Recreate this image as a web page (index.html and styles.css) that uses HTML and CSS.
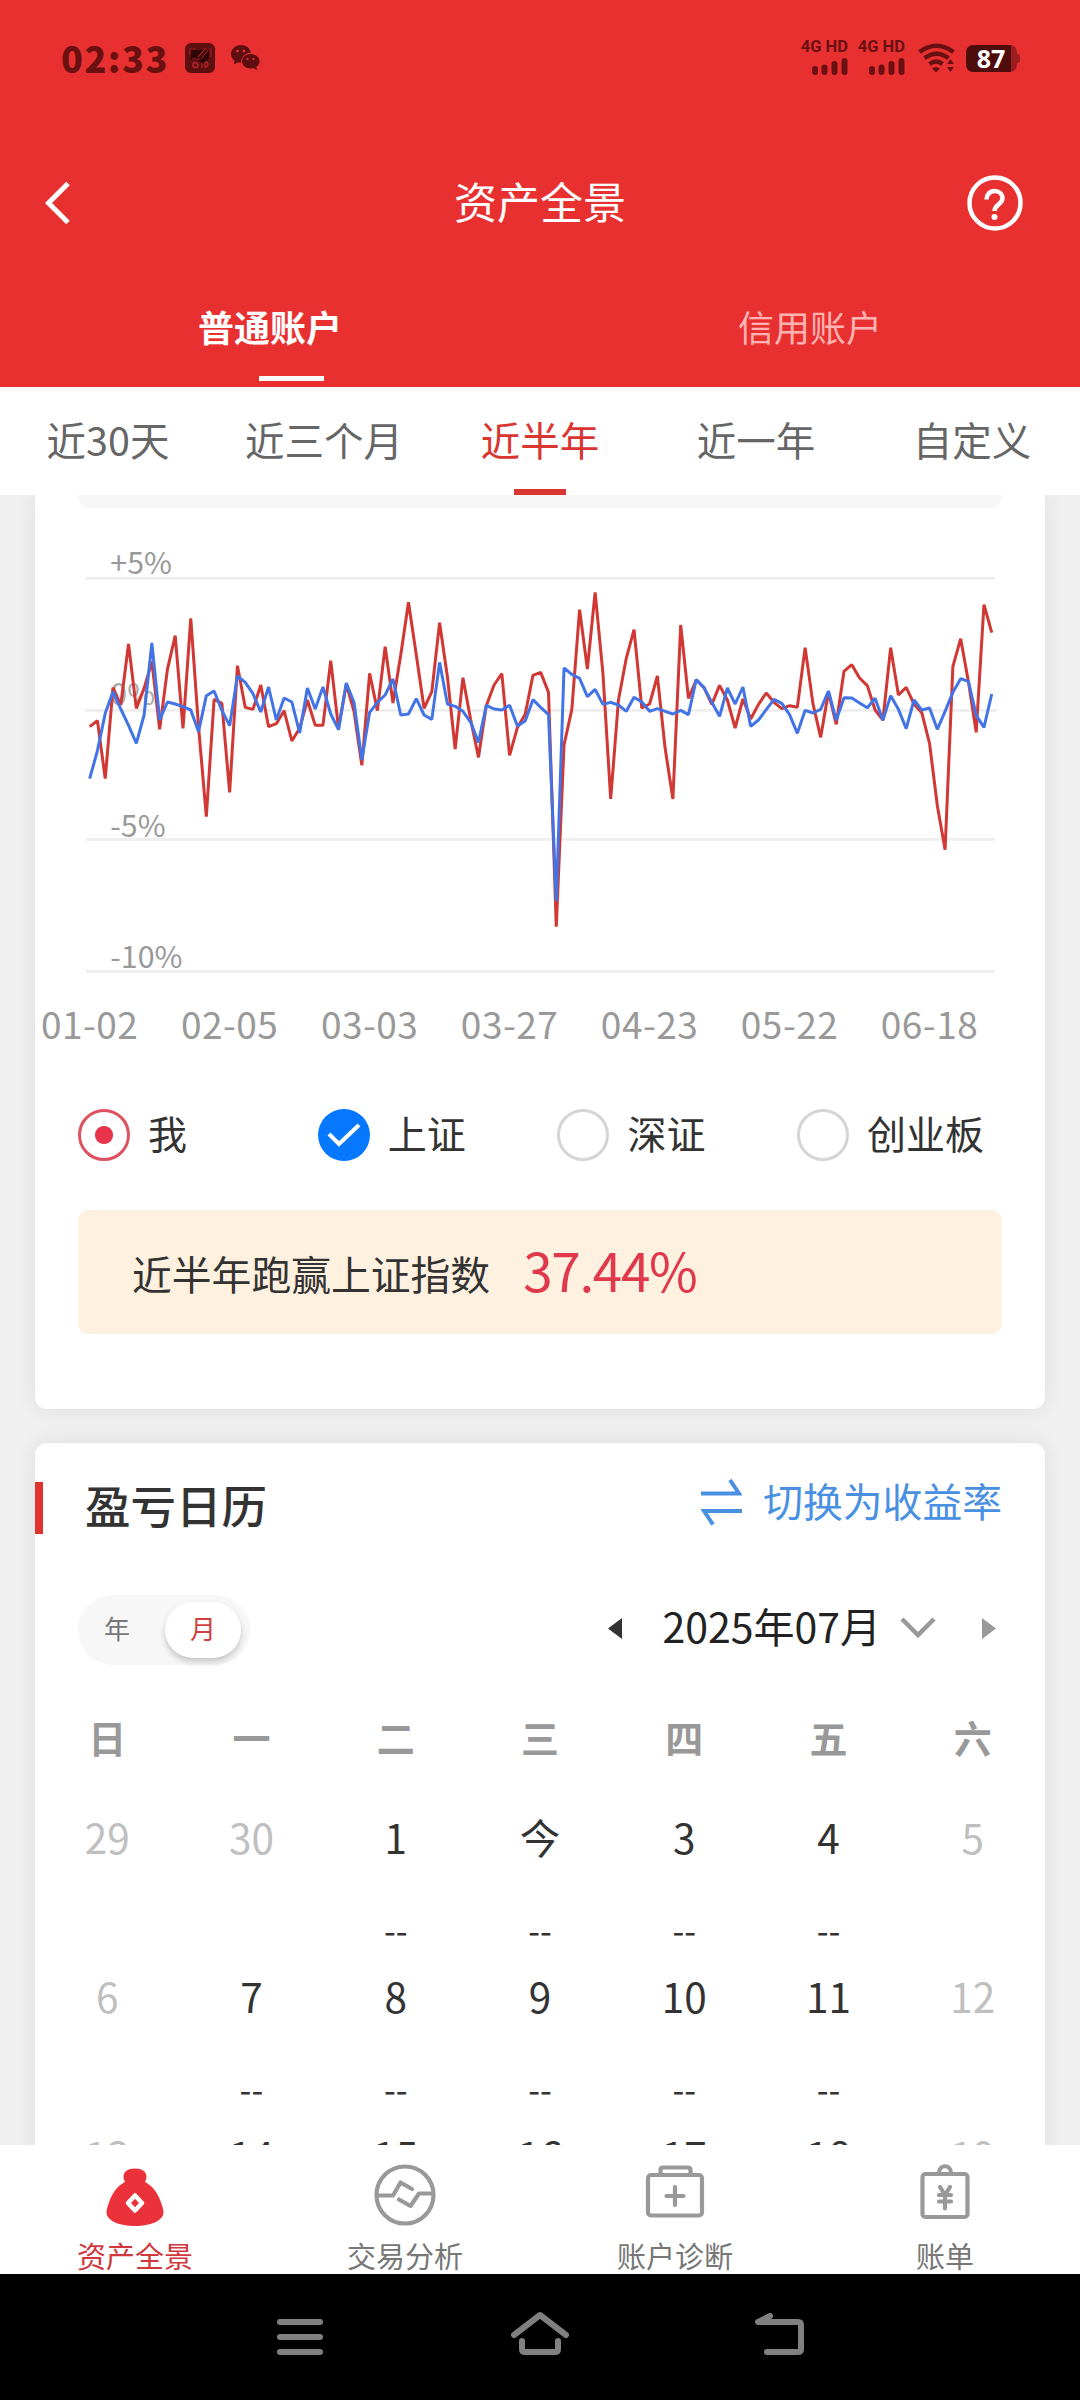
FILE: index.html
```html
<!DOCTYPE html>
<html lang="zh-CN">
<head>
    <meta charset="UTF-8">
    <meta name="viewport" content="width=device-width, initial-scale=1.0">
    <title>资产全景</title>
    <link rel="stylesheet" href="styles.css">
</head>
<body>
    <header class="header">
        <div class="status">
            <span class="time">02:33</span>
            <svg class="status-app" width="30" height="30" viewBox="0 0 30 30">
                <rect width="30" height="30" rx="6" fill="#5f0f10"/>
                <path d="M5 7h19v8l-5 6-6-4H6z" fill="#300507"/>
                <path d="M5 12V6h6M24 6h2v8M7 16h8M13 14l8-9M16 16l7-9" fill="none" stroke="#a02024" stroke-width="1.2"/>
                <circle cx="10.500" cy="22" r="2.600" fill="none" stroke="#b3262a" stroke-width="1.500"/>
                <path d="M17 20v5M20 19v5c4 0 4-5 0-5" fill="none" stroke="#b3262a" stroke-width="1.300"/>
            </svg>
            <svg class="status-chat" width="29" height="26" viewBox="0 0 29 26">
                <path d="M10 0C4.500 0 0 4 0 9c0 3 1.300 5 3.500 6.600L3 19.500l4-2.200 3 .5C10 12 14 8 20 7.800 19 3 15 0 10 0z" fill="#5f0f10"/>
                <path d="M19.500 9C15 9 11 12 11 16.300S15 23.500 19.500 23.500l3-.4 3.500 2-.7-3.300C27.500 20.500 28.500 18.500 28.500 16.300 28.500 12 24 9 19.500 9z" fill="#5f0f10"/>
                <g fill="#e83030"><circle cx="6.500" cy="6" r="1.300"/><circle cx="13" cy="6" r="1.300"/><circle cx="16.500" cy="14" r="1.100"/><circle cx="22.500" cy="14" r="1.100"/></g>
            </svg>
            <div class="status-right">
                <div class="signal">
                    <span>4G HD</span>
                    <svg width="36" height="17" viewBox="0 0 36 17"><path d="M3 11v3M12.500 9.500V14M22.500 6v8M32.500 3v11" stroke="#6b1011" stroke-width="6" stroke-linecap="round"/></svg>
                </div>
                <div class="signal">
                    <span>4G HD</span>
                    <svg width="36" height="17" viewBox="0 0 36 17"><path d="M3 11v3M12.500 9.500V14M22.500 6v8M32.500 3v11" stroke="#6b1011" stroke-width="6" stroke-linecap="round"/></svg>
                </div>
                <svg class="wifi" width="38" height="30" viewBox="0 0 38 30">
                    <g fill="none" stroke="#6b1011" stroke-width="4.500">
                        <path d="M1.500 9q17-12.500 34 0"/>
                        <path d="M6.500 15q12-8.500 24 0"/>
                        <path d="M11.500 21q7-5 13 0"/>
                    </g>
                    <path d="M14 25.500q4-3 8 0l-4 4z" fill="#6b1011"/>
                    <path d="M29 21l3.500-5 3.500 5zM29 24h7l-3.500 5z" fill="#6b1011"/>
                </svg>
                <div class="battery"><span>87</span></div>
            </div>
        </div>
        <div class="title-bar">
            <svg width="26" height="44" viewBox="0 0 26 44"><path d="M23 2.500L3.500 22 23 41.500" fill="none" stroke="#fff" stroke-width="5"/></svg>
            <h1>资产全景</h1>
            <svg width="56" height="58" viewBox="0 0 56 58">
                <circle cx="28" cy="29" r="25.500" fill="none" stroke="#fff" stroke-width="4.500"/>
                <path d="M19.500 25.500c0-5 3.500-8.500 8-8.500s8 3 8 7.500c0 5.500-8 6-8 12.500" fill="none" stroke="#fff" stroke-width="4.500"/>
                <circle cx="27.500" cy="43" r="3" fill="#fff"/>
            </svg>
        </div>
        <nav class="account-tabs">
            <a class="active">普通账户</a>
            <a>信用账户</a>
        </nav>
    </header>

    <nav class="period-tabs">
        <a>近30天</a>
        <a>近三个月</a>
        <a class="active">近半年</a>
        <a>近一年</a>
        <a>自定义</a>
    </nav>

    <main class="content">
        <section class="card card-chart">
            <div class="summary-end"></div>
            <svg class="chart" viewBox="0 0 3030 1560">
                <g class="grid">
                    <path d="M153 115H2880M149 511H2885M153 898H2880M153 1294H2880"/>
                </g>
                <g class="y-labels">
                    <text x="226" y="101">+5%</text>
                    <text x="226" y="496" class="zero">0%</text>
                    <text x="226" y="890">-5%</text>
                    <text x="226" y="1283">-10%</text>
                </g>
                <polyline id="line-me" class="line-me"/>
                <polyline id="line-index" class="line-index"/>
                <g id="x-labels" class="x-labels"></g>
            </svg>
            <div class="legend">
                <div class="legend-item"><span class="radio me"></span><label>我</label></div>
                <div class="legend-item">
                    <span class="radio checked"><svg width="34" height="26" viewBox="0 0 34 26"><path d="M2 12l10 10L32 3" fill="none" stroke="#fff" stroke-width="4"/></svg></span>
                    <label>上证</label>
                </div>
                <div class="legend-item"><span class="radio"></span><label>深证</label></div>
                <div class="legend-item"><span class="radio"></span><label>创业板</label></div>
            </div>
            <div class="banner">
                <span>近半年跑赢上证指数</span>
                <strong>37.44%</strong>
            </div>
        </section>

        <section class="card card-calendar">
            <div class="card-head">
                <h2>盈亏日历</h2>
                <a class="switch">
                    <svg width="41" height="47" viewBox="0 0 41 47"><path d="M0 14.500h38L29 1M41 32H3l9 13.500" fill="none" stroke="#4a90e2" stroke-width="4"/></svg>
                    <span>切换为收益率</span>
                </a>
            </div>
            <div class="calendar-bar">
                <div class="toggle">
                    <span>年</span>
                    <span class="active">月</span>
                </div>
                <div class="month">
                    <svg width="14" height="21" viewBox="0 0 14 21"><path d="M14 0v21L0 10.500z" fill="#333"/></svg>
                    <span>2025年07月</span>
                    <svg class="chevron" width="36" height="24" viewBox="0 0 36 24"><path d="M2 3l16 16L34 3" fill="none" stroke="#999" stroke-width="4.500"/></svg>
                    <svg width="14" height="21" viewBox="0 0 14 21"><path d="M0 0v21l14-10.500z" fill="#999"/></svg>
                </div>
            </div>
            <div class="week">
                <span>日</span><span>一</span><span>二</span><span>三</span><span>四</span><span>五</span><span>六</span>
            </div>
            <div class="days" id="days"></div>
        </section>
    </main>

    <nav class="tabbar">
        <a class="active">
            <svg width="64" height="64" viewBox="0 0 64 64">
                <path d="M20.500 13.500c0-5 4.500-8 11.500-8s11.500 3 11.500 8c0 3-1 4-1.500 5.500C50 23 55.500 31 58.500 41c1.500 4 2 6 2 8 0 9-13.500 14-28.500 14S3.500 58 3.500 49c0-2 .5-4 2-8 3-10 8.500-18 16.500-22-.5-1.500-1.500-2.500-1.500-5.500z" fill="#eb323a"/>
                <path d="M32 32.500l7 7.500-7 7.500-7-7.500z" fill="none" stroke="#fff" stroke-width="4.500" stroke-linejoin="round"/>
            </svg>
            资产全景
        </a>
        <a>
            <svg width="64" height="64" viewBox="0 0 64 64">
                <g fill="none" stroke="#999" stroke-width="4.200" stroke-linecap="round" stroke-linejoin="round">
                    <circle cx="32" cy="32" r="28.500"/>
                    <path d="M4 32.500h16l7.500-13L39 26M60 30.500H46L37.500 43 26 36.500"/>
                </g>
            </svg>
            交易分析
        </a>
        <a>
            <svg width="64" height="64" viewBox="0 0 64 64">
                <g fill="none" stroke="#999" stroke-width="4.200" stroke-linejoin="round">
                    <rect x="5" y="12" width="54" height="40.500" rx="3"/>
                    <path d="M17.500 12V7q0-2.500 2.500-2.500h25q2.500 0 2.500 2.500v5"/>
                    <path d="M32 24v18M23.500 33h17" stroke-linecap="round"/>
                </g>
            </svg>
            账户诊断
        </a>
        <a>
            <svg width="64" height="64" viewBox="0 0 64 64">
                <g fill="none" stroke="#999" stroke-width="4.200" stroke-linejoin="round">
                    <rect x="9.500" y="11" width="45" height="43" rx="3"/>
                    <path d="M26 10c0-9 12-9 12 0"/>
                    <path d="M27 24l5 8 5-8M32 32v13.500M26 32h12M26 38.500h12" stroke-linecap="round"/>
                </g>
            </svg>
            账单
        </a>
    </nav>

    <footer class="system-nav">
        <svg width="60" height="60" viewBox="0 0 60 60"><path d="M10 22h40M10 37h40M10 52h40"/></svg>
        <svg width="60" height="60" viewBox="0 0 60 60"><path d="M4 35l26-20 26 20M12 41v8q0 3 3 3h30q3 0 3-3v-8"/></svg>
        <svg width="60" height="60" viewBox="0 0 60 60"><path d="M20 16L8 22h40q3 0 3 3v24q0 3-3 3H17"/></svg>
    </footer>

    <script>
        // y positions of each trading day, in chart units
        const me = [
            560, 542, 716, 443, 495, 312, 505, 445, 365, 568, 388, 287, 565, 235, 560, 830, 478, 490, 757, 377,
            502, 508, 435, 560, 551, 512, 603, 565, 480, 556, 556, 362, 565, 432, 515, 676, 400, 512, 320, 489,
            345, 187, 345, 505, 455, 248, 410, 627, 413, 540, 652, 497, 435, 401, 646, 563, 523, 406, 397, 457,
            1160, 615, 508, 209, 387, 157, 400, 777, 480, 355, 269, 504, 492, 408, 625, 777, 255, 475, 420, 443,
            493, 436, 480, 564, 477, 537, 493, 459, 487, 506, 497, 502, 323, 490, 592, 457, 553, 394, 374, 414,
            437, 510, 540, 323, 465, 442, 492, 518, 610, 797, 929, 380, 296, 425, 577, 194, 278
        ];
        const index = [
            716, 632, 520, 455, 507, 556, 610, 525, 309, 540, 486, 492, 500, 510, 575, 467, 453, 511, 557, 408,
            427, 461, 516, 441, 540, 474, 486, 579, 444, 507, 441, 522, 569, 429, 488, 660, 517, 487, 465, 417,
            525, 522, 476, 525, 538, 367, 492, 499, 514, 547, 607, 496, 507, 510, 496, 558, 543, 479, 502, 524,
            1083, 384, 403, 415, 470, 448, 493, 487, 495, 514, 472, 486, 514, 506, 514, 522, 511, 524, 419, 443,
            487, 529, 444, 492, 441, 559, 540, 509, 478, 490, 524, 580, 511, 519, 508, 453, 541, 473, 474, 489,
            503, 475, 541, 467, 508, 566, 480, 510, 504, 568, 514, 457, 416, 424, 526, 562, 462
        ];
        const dates = ['01-02', '02-05', '03-03', '03-27', '04-23', '05-22', '06-18'];
        const startX = 164;
        const stepX = 23.33;

        function toPoints(data) {
            return data.map((y, i) => `${(startX + i * stepX).toFixed(1)},${y}`).join(' ');
        }

        document.querySelector('#line-me').setAttribute('points', toPoints(me));
        document.querySelector('#line-index').setAttribute('points', toPoints(index));
        document.querySelector('#x-labels').innerHTML = dates
            .map((d, i) => `<text x="${startX + i * stepX * 18}" y="1497">${d}</text>`)
            .join('');

        const days = [29, 30, 1, '今', 3, 4, 5, 6, 7, 8, 9, 10, 11, 12, 13, 14, 15, 16, 17, 18, 19];
        let html = '';
        days.forEach((day, i) => {
            const off = i < 2 || i % 7 === 0 || i % 7 === 6;
            const profit = off || i >= 14 ? '' : '<em>--</em>';
            html += `
                <div class="day${off ? ' off' : ''}">
                    <span>${day}</span>
                    ${profit}
                </div>
            `;
        });
        document.querySelector('#days').innerHTML = html;
    </script>
</body>
</html>
```
FILE: styles.css
```css
* {
    box-sizing: border-box;
    margin: 0;
    padding: 0;
}
body {
    width: 1080px;
    height: 2400px;
    overflow: hidden;
    font-family: "Noto Sans CJK SC", sans-serif;
    color: #333;
    background-color: #f0f0f0;
}
svg {
    display: block;
    flex-shrink: 0;
}
.header {
    height: 387px;
    background-color: #e83030;
    color: #fff;
}
.status {
    display: flex;
    align-items: center;
    height: 116px;
    padding: 0 63px 0 61px;
    color: #6b1011;
}
.time {
    width: 124px;
    padding-bottom: 2px;
    font-size: 36px;
    font-weight: 900;
    letter-spacing: 1.500px;
    line-height: 1;
}
.status-chat {
    margin-left: 16px;
}
.status-right {
    display: flex;
    align-items: center;
    margin-left: auto;
}
.signal {
    display: flex;
    flex-direction: column;
    align-items: flex-end;
    gap: 4px;
    width: 47px;
    margin-right: 10px;
    padding-bottom: 2px;
}
.signal span {
    font-family: Roboto, sans-serif;
    font-size: 16.500px;
    font-weight: 700;
    line-height: 14px;
    white-space: nowrap;
}
.wifi {
    margin: 0 10px 0 3px;
}
.battery {
    width: 51px;
    height: 27px;
    padding-right: 1px;
    border-radius: 7px;
    background: linear-gradient(to right, #4f0c0d 45px, #9c1d20 45px);
    color: #fff;
    font-family: "Open Sans", sans-serif;
    font-size: 25px;
    font-weight: 700;
    line-height: 27px;
    text-align: center;
    position: relative;
}
.battery::after {
    content: "";
    position: absolute;
    right: -3px;
    top: 9px;
    width: 4px;
    height: 9px;
    border-radius: 0 3px 3px 0;
    background-color: #9c1d20;
}
.title-bar {
    display: flex;
    align-items: center;
    justify-content: space-between;
    height: 174px;
    padding: 0 57px 0 45px;
}
.title-bar h1 {
    margin-left: 42px;
    padding-bottom: 6px;
    font-size: 43px;
    font-weight: 400;
}
.account-tabs {
    display: flex;
    height: 97px;
}
.account-tabs a {
    flex: 1;
    position: relative;
    font-size: 36px;
    line-height: 73px;
    text-align: center;
    color: #ffb3b3;
}
.account-tabs .active {
    color: #fff;
    font-weight: 700;
}
.account-tabs .active::after {
    content: "";
    position: absolute;
    left: 259px;
    bottom: 6px;
    width: 65px;
    height: 5px;
    background-color: #fff;
}
.period-tabs {
    display: flex;
    height: 108px;
    background-color: #fff;
}
.period-tabs a {
    flex: 1;
    position: relative;
    font-size: 39.500px;
    line-height: 103px;
    text-align: center;
    color: #666;
}
.period-tabs .active {
    color: #d93632;
}
.period-tabs .active::after {
    content: "";
    position: absolute;
    left: 82px;
    bottom: 0;
    width: 52px;
    height: 6px;
    background-color: #d93632;
}
.content {
    height: 1650px;
    padding: 0 35px;
    overflow: hidden;
}
.card {
    background-color: #fff;
    box-shadow: 0 0 22px rgba(0, 0, 0, 0.08);
}
.card-chart {
    height: 914px;
    border-radius: 0 0 12px 12px;
}
.summary-end {
    height: 13px;
    margin: 0 43px 32px;
    border-radius: 0 0 12px 12px;
    background-color: #f7f7f7;
}
.chart {
    width: 1010px;
    height: 520px;
}
.grid path {
    stroke: #eee;
    stroke-width: 8;
}
.y-labels text {
    font-size: 91px;
    fill: #999;
}
.y-labels .zero {
    fill: #aaa;
}
.x-labels text {
    font-size: 111px;
    letter-spacing: 1.500px;
    fill: #999;
    text-anchor: middle;
}
.line-me,
.line-index {
    fill: none;
    stroke: #d13733;
    stroke-width: 9;
    stroke-linejoin: bevel;
}
.line-index {
    stroke: #4374e6;
}
.legend {
    display: flex;
    margin: 49px 0 0 43px;
}
.legend-item {
    display: flex;
    align-items: center;
    gap: 18px;
    width: 239.700px;
    height: 52px;
    font-size: 39px;
    white-space: nowrap;
}
.legend-item label {
    padding-bottom: 6px;
}
.radio {
    display: flex;
    align-items: center;
    justify-content: center;
    width: 52px;
    height: 52px;
    border: 3px solid #d5d5d5;
    border-radius: 50%;
}
.radio.me {
    border-color: #dd5160;
    background: radial-gradient(circle, #e8344a 8.500px, #fff 9.500px);
}
.radio.checked {
    border: none;
    background-color: #0578ff;
}
.banner {
    display: flex;
    align-items: center;
    gap: 33px;
    height: 124px;
    margin: 49px 43px 0;
    padding-left: 54px;
    border-radius: 10px;
    background-color: #fff1df;
    font-size: 39.800px;
}
.banner strong {
    padding-bottom: 6px;
    font-size: 53px;
    font-weight: 400;
    letter-spacing: -1.300px;
    line-height: 1;
    color: #df394b;
}
.card-calendar {
    height: 800px;
    margin-top: 34px;
    padding-top: 39px;
    border-radius: 12px;
}
.card-head {
    display: flex;
    justify-content: space-between;
    height: 52px;
    padding-right: 43px;
}
.card-head h2 {
    padding-left: 42px;
    border-left: 8px solid #e1332f;
    font-size: 45.500px;
    font-weight: 500;
    line-height: 44px;
}
.switch {
    display: flex;
    align-items: center;
    gap: 21px;
    height: 40px;
    font-size: 39.800px;
    color: #4a90e2;
}
.switch span {
    padding-bottom: 6px;
}
.calendar-bar {
    display: flex;
    justify-content: space-between;
    margin-top: 61px;
    padding: 0 49px 0 43px;
}
.toggle {
    display: flex;
    align-items: center;
    width: 172px;
    height: 70px;
    padding: 0 9px 0 1px;
    border-radius: 35px;
    background-color: #f7f7f7;
    font-size: 26px;
    color: #777;
}
.toggle span {
    width: 76px;
    height: 56px;
    margin-right: 10px;
    border-radius: 28px;
    line-height: 52px;
    text-align: center;
}
.toggle .active {
    margin-right: 0;
    background-color: #fff;
    color: #d04040;
    box-shadow: 0 4px 6px rgba(0, 0, 0, 0.2);
}
.month {
    display: flex;
    align-items: center;
    height: 66px;
    font-size: 41px;
    color: #222;
}
.month span {
    margin: 0 19px 0 40px;
    padding-bottom: 7px;
}
.chevron {
    margin-right: 46px;
}
.week,
.days {
    display: grid;
    grid-template-columns: repeat(7, 1fr);
    text-align: center;
}
.week {
    margin-top: 52px;
    font-size: 38px;
    font-weight: 700;
    line-height: 40px;
    color: #999;
}
.days {
    margin-top: 50px;
}
.day {
    height: 159px;
    font-size: 40.500px;
    line-height: 60px;
}
.day span,
.day em {
    display: block;
}
.day em {
    margin-top: 33px;
    font-size: 34px;
    font-style: normal;
}
.day.off {
    color: #bfbfbf;
}
.tabbar {
    display: flex;
    height: 129px;
    padding-top: 18px;
    background-color: #fff;
}
.tabbar a {
    display: flex;
    flex: 1;
    flex-direction: column;
    align-items: center;
    font-size: 29px;
    line-height: 57px;
    color: #777;
}
.tabbar .active {
    color: #d0383e;
}
.system-nav {
    display: flex;
    justify-content: center;
    gap: 180px;
    height: 126px;
    padding-top: 26px;
    background-color: #000;
}
.system-nav path {
    fill: none;
    stroke: #808080;
    stroke-width: 6;
    stroke-linecap: round;
    stroke-linejoin: round;
}
```
